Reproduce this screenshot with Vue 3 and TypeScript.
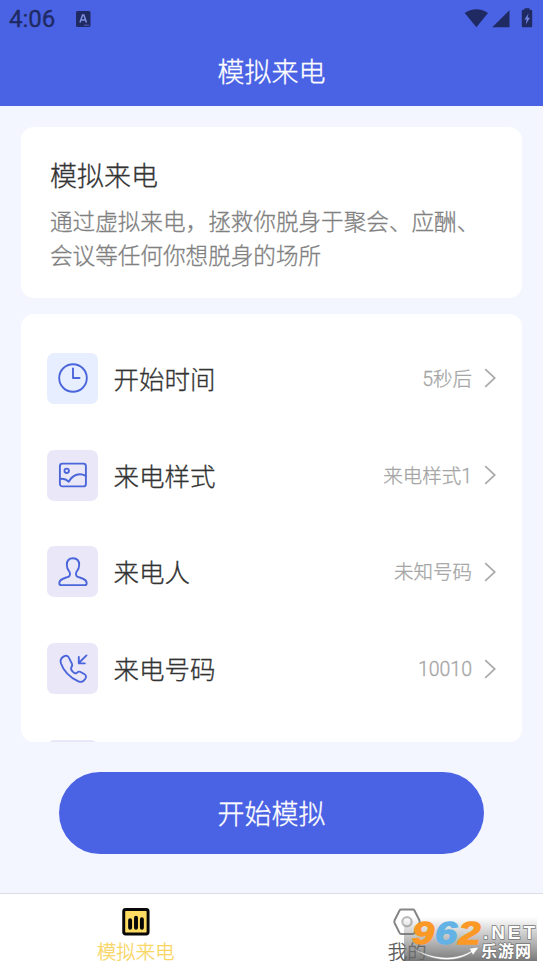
<script setup lang="ts">
interface Setting {
  icon: 'clock' | 'image' | 'person' | 'phone' | 'more'
  label: string
  value: string
}

const settings: Setting[] = [
  { icon: 'clock', label: '开始时间', value: '5秒后' },
  { icon: 'image', label: '来电样式', value: '来电样式1' },
  { icon: 'person', label: '来电人', value: '未知号码' },
  { icon: 'phone', label: '来电号码', value: '10010' },
  { icon: 'more', label: '', value: '' },
]
</script>

<template>
  <div class="screen">
    <header class="header">
      <div class="status">
        <span class="time">4:06</span>
        <svg class="badge" width="15" height="16" viewBox="0 0 15 16">
          <rect width="14.5" height="16" rx="1.5" fill="#1f2a63" />
          <path d="M4 11.5 6.6 4h1.2l2.7 7.5M5 9h4.5" fill="none" stroke="#7f90e0" stroke-width="1.5" />
          <path d="M8 14.2h5" stroke="#5261b5" stroke-width="1" />
        </svg>
        <svg class="signals" width="70" height="22" viewBox="0 0 70 22">
          <path d="M.7 5C7-.1 17.700-.1 24 5L12.400 19.200Z" fill="#1f2a63" />
          <path d="M45.500 2.300V19.200H28.200Z" fill="#1f2a63" />
          <path d="M60.500.2h5v1.500H67q1.200 0 1.200 1.200V18q0 1.200-1.200 1.200h-8q-1.200 0-1.200-1.200V2.900q0-1.200 1.200-1.200h1.500Z" fill="#1f2a63" />
          <path d="M64.500 5.500 60.500 11.500h2.200L61.700 16.500 66 9.800h-2.300Z" fill="#7184df" />
        </svg>
      </div>
      <h1 class="title">模拟来电</h1>
    </header>

    <main class="content">
      <section class="intro">
        <h2>模拟来电</h2>
        <p>通过虚拟来电，拯救你脱身于聚会、应酬、<br />会议等任何你想脱身的场所</p>
      </section>

      <section class="settings">
        <div v-for="item in settings" :key="item.icon" class="row">
          <div class="tile" :class="item.icon">
            <svg width="30" height="30" viewBox="0 0 30 30">
              <template v-if="item.icon === 'clock'">
                <circle cx="15" cy="15" r="13.800" />
                <path d="M15 5.500V15h6.500" />
              </template>
              <template v-else-if="item.icon === 'image'">
                <rect x="1.900" y="3.600" width="26" height="22.800" rx="2.500" />
                <circle cx="8.700" cy="10.800" r="2.200" />
                <path d="M2 19c3.500-.8 6 0 8.800 2.700C14 15.500 21 12 27.800 15.800" />
              </template>
              <template v-else-if="item.icon === 'person'">
                <path d="M15 1.300c-4.200 0-6.200 2.900-6.200 6.700 0 3.300 1.200 5.300 2.800 7.200.8 1.100.4 3.600-.9 4.400C7.600 21.300 1.300 21.200 1.300 26.200q0 1.900 2 1.900h23.400q2 0 2-1.900c0-5-6.300-4.900-9.400-6.600-1.300-.8-1.700-3.300-.9-4.400 1.600-1.900 2.800-3.900 2.800-7.200 0-3.800-2-6.700-6.200-6.700Z" />
              </template>
              <template v-else-if="item.icon === 'phone'">
                <path d="M6.300 2.100C3.300 3.600 2 6.300 2.900 9.200c2.800 8.300 9 14.200 17.500 18.200 3.500 1.400 6.500-.7 7.600-4.100.3-1.500-.2-2.300-1.400-3l-4-2.300c-1.500-.8-2.500-.4-3.600.7-1.300 1.200-2.500.7-3.800-.6-1.500-1.500-2.900-3-1.900-4.700 1-1.300 1.200-2.400.6-3.700L11 3.900c-.9-2-2.800-2.700-4.700-1.800Z" />
                <path d="M28.500 1.400 20.800 9M20.800 3v6.400h6" />
              </template>
            </svg>
          </div>
          <span class="label">{{ item.label }}</span>
          <span class="value">{{ item.value }}</span>
          <svg class="chevron" width="12" height="20" viewBox="0 0 12 20">
            <path d="M1.200 1.200 10.800 10l-9.600 8.800" fill="none" stroke="#aaa" stroke-width="1.700" />
          </svg>
        </div>
      </section>

      <button class="start" type="button">开始模拟</button>
    </main>

    <nav class="tabs">
      <div class="tab active">
        <svg width="28" height="28" viewBox="0 0 28 28">
          <rect x="1.500" y="1.500" width="24.800" height="25" rx="2" fill="#ffdc62" stroke="#080808" stroke-width="3" />
          <path d="M8 12.500v7.700M14 10v10.200M20 11.500v8.700" stroke="#080808" stroke-width="4" stroke-linecap="round" />
        </svg>
        <span>模拟来电</span>
      </div>
      <div class="tab">
        <svg width="28" height="28" viewBox="0 0 28 28">
          <path d="M8 1.500h12q1 0 1.600 1l5 10q.6 1.500 0 2.800l-5 10q-.6 1.200-1.600 1.200H8q-1 0-1.600-1.200l-5-10q-.6-1.300 0-2.800l5-10q.6-1 1.600-1Z" fill="none" stroke="#858585" stroke-width="2" />
          <circle cx="14" cy="14" r="4.700" fill="none" stroke="#bcbcbc" stroke-width="2.300" />
        </svg>
        <span>我的</span>
      </div>
    </nav>

    <svg class="brand" width="134" height="50" viewBox="0 0 134 50">
      <defs>
        <linearGradient id="shade" x2="0" y2="1">
          <stop offset="0" stop-color="#777" stop-opacity="0" />
          <stop offset=".5" stop-color="#777" stop-opacity=".48" />
          <stop offset="1" stop-color="#666" stop-opacity=".88" />
        </linearGradient>
        <linearGradient id="orange" x2="0" y2="1">
          <stop offset="0" stop-color="#f58b1c" />
          <stop offset="1" stop-color="#ffb13d" />
        </linearGradient>
      </defs>
      <rect y="6" width="133" height="44" fill="url(#shade)" />
      <g class="digits">
        <text x="8" y="33" textLength="22" lengthAdjust="spacingAndGlyphs" fill="#fb9826" stroke="#fb9826">9</text>
        <text x="31" y="33" textLength="22" lengthAdjust="spacingAndGlyphs" fill="#62b2e5" stroke="#62b2e5">6</text>
        <text x="54.500" y="33" textLength="22" lengthAdjust="spacingAndGlyphs" fill="#fb9826" stroke="#fb9826">2</text>
      </g>
      <path d="M7 36c20 12 44 14 60 4l-2-2.500 10-1.500-6 8-1.500-2.500C49 54 24 49 7 36Z" fill="#fff" stroke="#888" stroke-width=".5" />
      <text class="net" x="79" y="28" textLength="52">.NET</text>
      <text class="site" x="77" y="46" textLength="50">乐游网</text>
    </svg>
  </div>
</template>

<style>
body {
  margin: 0;
  overflow: hidden;
}
</style>

<style scoped>
.screen {
  position: relative;
  width: 543px;
  height: 967px;
  display: flex;
  flex-direction: column;
  overflow: hidden;
  background: #f3f6fe;
  font-family: Roboto, "Noto Sans CJK SC", sans-serif;
  color: #333;
}
.header {
  height: 105.600px;
  flex: none;
  background: #4a63e4;
}
.status {
  height: 37px;
  display: flex;
  align-items: center;
  padding: 0 9px;
}
.time {
  width: 67px;
  font-size: 24px;
  font-weight: 400;
  color: #1f2a63;
  -webkit-text-stroke: .35px #1f2a63;
}
.signals {
  margin-left: auto;
}
.title {
  margin: 0;
  padding-top: 2px;
  height: 66px;
  line-height: 68px;
  text-align: center;
  font-size: 27px;
  font-weight: 300;
  color: #fff;
}
.title,
.intro,
.label,
.start,
.tab {
  -webkit-text-stroke: .3px currentColor;
}
.content {
  flex: 1;
  display: flex;
  flex-direction: column;
  padding: 21.400px 21px 0;
}
.intro {
  box-sizing: border-box;
  height: 171.500px;
  padding: 29px 29px 0;
  border-radius: 13px;
  background: #fff;
}
.intro h2 {
  margin: 0;
  font-size: 27px;
  line-height: 42px;
  font-weight: 300;
}
.intro p {
  margin: 8px 0 0;
  font-size: 22.600px;
  font-weight: 300;
  line-height: 34px;
  color: #808080;
  -webkit-text-stroke: .3px #808080;
  white-space: nowrap;
}
.settings {
  box-sizing: border-box;
  height: 428.500px;
  margin-top: 15.200px;
  padding-top: 39.300px;
  border-radius: 13px;
  background: #fff;
  overflow: hidden;
  display: flex;
  flex-direction: column;
  gap: 45.700px;
}
.row {
  height: 51px;
  flex: none;
  display: flex;
  align-items: center;
  padding: 0 26px;
}
.tile {
  width: 51px;
  height: 51px;
  border-radius: 7px;
  background: #eae8f8;
  display: flex;
  align-items: center;
  justify-content: center;
}
.tile.clock {
  background: #e7eeff;
}
.tile svg {
  fill: none;
  stroke: #4b65da;
  stroke-width: 1.900;
  stroke-linejoin: round;
  stroke-linecap: round;
}
.label {
  margin-left: 15.500px;
  padding-bottom: 2px;
  font-size: 25.500px;
  font-weight: 300;
}
.value {
  margin-left: auto;
  padding-top: 3px;
  font-size: 19.500px;
  font-weight: 300;
  line-height: 30px;
  color: #a5a5a5;
  -webkit-text-stroke: .3px #a5a5a5;
}
.chevron {
  margin-left: 12px;
}
.start {
  width: 425px;
  height: 81.800px;
  margin: 29.800px auto 0;
  padding: 0;
  border: 0;
  border-radius: 41px;
  background: #4a63e4;
  color: #fff;
  font: inherit;
  font-size: 27px;
  font-weight: 300;
}
.tabs {
  height: 73px;
  flex: none;
  display: flex;
  border-top: 1px solid #dadde6;
  background: #fff;
}
.tab {
  flex: 1;
  display: flex;
  flex-direction: column;
  align-items: center;
  padding-top: 14px;
  font-size: 19.400px;
  font-weight: 300;
  line-height: 28px;
  color: #555;
}
.tab span {
  margin-top: 3.500px;
}
.tab.active {
  color: #f9d562;
}
.brand {
  position: absolute;
  left: 404px;
  top: 911px;
}
.digits {
  font: italic 700 32px "Liberation Sans", sans-serif;
  stroke-width: 1.300px;
}
.net {
  font: 700 19px "Liberation Sans", sans-serif;
  fill: #fff;
  stroke: #777;
  stroke-width: 1.500px;
  paint-order: stroke;
}
.site {
  font: 700 16px "Noto Sans CJK SC", sans-serif;
  fill: #fff;
  stroke: #777;
  stroke-width: 1.500px;
  paint-order: stroke;
}
</style>
